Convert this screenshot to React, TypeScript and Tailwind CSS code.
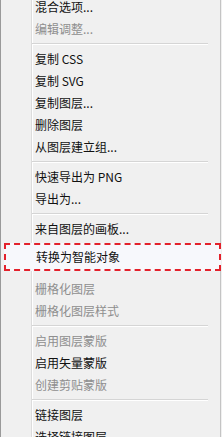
import React from 'react';

type Item = { label: string; disabled?: boolean } | 'sep' | 'hl';

const items: Item[] = [
    { label: '混合选项...' },
    { label: '编辑调整...', disabled: true },
    'sep',
    { label: '复制 CSS' },
    { label: '复制 SVG' },
    { label: '复制图层...' },
    { label: '删除图层' },
    { label: '从图层建立组...' },
    'sep',
    { label: '快速导出为 PNG' },
    { label: '导出为...' },
    'sep',
    { label: '来自图层的画板...' },
    'hl',
    { label: '栅格化图层', disabled: true },
    { label: '栅格化图层样式', disabled: true },
    'sep',
    { label: '启用图层蒙版', disabled: true },
    { label: '启用矢量蒙版' },
    { label: '创建剪贴蒙版', disabled: true },
    'sep',
    { label: '链接图层' },
    { label: '选择链接图层' },
];

export default function App() {
    return (
        <div
            className="relative w-[222px] h-[437px] overflow-hidden bg-[#f0f0f0] border-l border-[#9a9a9a]"
            style={{ fontFamily: '"Noto Sans CJK SC", "Liberation Sans", sans-serif' }}
        >
            {/* gutter line */}
            <div className="absolute left-[30px] top-0 bottom-0 w-px bg-[#dcdcdc]"></div>
            <div className="absolute left-[31px] top-0 bottom-0 w-px bg-white"></div>
            {/* right edge */}
            <div className="absolute right-[1px] top-0 bottom-0 w-px bg-[#c4c4c4]"></div>

            <div className="relative flex flex-col mt-[-4px]">
                {items.map((it, i) => {
                    if (it === 'sep') {
                        return (
                            <div key={i} className="h-[8px] flex flex-col justify-center pl-[31px] pr-[14px]">
                                <div className="h-px bg-[#d5d5d5]"></div>
                                <div className="h-px bg-white"></div>
                            </div>
                        );
                    }
                    if (it === 'hl') {
                        return (
                            <div key={i} className="pt-[3px] pb-[7px] pl-[3px] pr-[1px]">
                                <div className="h-[28px] flex items-center pl-[30px] bg-[#f7f8fc] border-2 border-dashed border-[#e3212b]">
                                    <span className="text-[12px] text-[#111]">转换为智能对象</span>
                                </div>
                            </div>
                        );
                    }
                    return (
                        <div key={i} className="h-[22px] flex items-center pl-[34px]">
                            <span className={`text-[12px] ${it.disabled ? 'text-[#8e8e8e]' : 'text-[#111]'}`}>
                                {it.label}
                            </span>
                        </div>
                    );
                })}
            </div>
        </div>
    );
}
